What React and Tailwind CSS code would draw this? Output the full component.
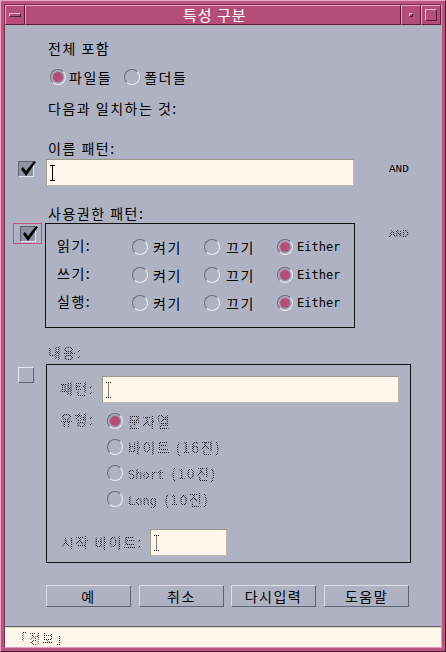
import React from "react";

const STIP =
  "bg-[image:repeating-conic-gradient(#000_0%_25%,transparent_0%_50%)] bg-[length:2px_2px] bg-clip-text text-transparent";

function Radio({ on }) {
  return (
    <span className="relative inline-block w-[16px] h-[16px] shrink-0 rounded-full border border-t-[#6a6d7b] border-l-[#6a6d7b] border-r-[#eceef4] border-b-[#eceef4]">
      {on && <span className="absolute inset-[1px] rounded-full bg-[#b44e78] border border-[#9aa0b3]" />}
    </span>
  );
}

function Check({ on }) {
  return (
    <span
      className={
        "relative inline-block w-[16px] h-[16px] shrink-0 border " +
        (on
          ? "bg-[#8e92a5] border-t-[#5f6270] border-l-[#5f6270] border-r-[#e6e8ef] border-b-[#e6e8ef]"
          : "bg-[#aeb2c3] border-t-[#e6e8ef] border-l-[#e6e8ef] border-r-[#5f6270] border-b-[#5f6270]")
      }
    >
      {on && (
        <svg className="absolute left-[1px] -top-[1px]" width="16" height="16" viewBox="0 0 16 16">
          <polygon points="1,8 3,6 6,10 14,0 16,1 6,15" fill="#000" />
        </svg>
      )}
    </span>
  );
}

function Cursor({ dim }) {
  return (
    <svg width="7" height="16" viewBox="0 0 7 16" className="shrink-0">
      <g stroke="#000" strokeWidth="1" strokeDasharray={dim ? "1 1" : undefined}>
        <line x1="1" y1="0.5" x2="6" y2="0.5" />
        <line x1="3.5" y1="0.5" x2="3.5" y2="15.5" />
        <line x1="1" y1="15.5" x2="6" y2="15.5" />
      </g>
    </svg>
  );
}

function Field({ w, dim }) {
  return (
    <div
      className={`h-[27px] ${w} bg-[#fff7eb] border border-t-[#9c9889] border-l-[#9c9889] border-r-[#bfbbac] border-b-[#bfbbac] flex items-center pl-[2px]`}
    >
      <Cursor dim={dim} />
    </div>
  );
}

const MONO = "font-['DejaVu_Sans_Mono',monospace] tracking-normal";
const LMONO = "font-['Liberation_Mono',monospace] tracking-normal";

function PermRow({ label }) {
  return (
    <div className="h-[28px] flex items-center">
      <span className="w-[75px] leading-[16px] -mt-[4px]">{label}</span>
      <div className="w-[72px] flex items-center">
        <Radio />
        <span className="ml-[5px]">켜기</span>
      </div>
      <div className="w-[73px] flex items-center">
        <Radio />
        <span className="ml-[6px]">끄기</span>
      </div>
      <div className="flex items-center">
        <Radio on />
        <span className={"ml-[4px] text-[12px] " + MONO}>Either</span>
      </div>
    </div>
  );
}

function TypeRow({ on, children }) {
  return (
    <div className="h-[26px] flex items-center pl-[60px]">
      <Radio on={on} />
      <span className={"ml-[5px] " + STIP}>{children}</span>
    </div>
  );
}

function Btn({ children, cls = "" }) {
  return (
    <div
      className={`w-[85px] h-[22px] flex items-center justify-center border border-t-[#dcdee7] border-l-[#dcdee7] border-r-[#5f6271] border-b-[#5f6271] ${cls}`}
    >
      {children}
    </div>
  );
}

export default function App() {
  return (
    <div className="w-[446px] h-[652px] bg-[#b8557f] border border-t-[#eaa6c4] border-l-[#eaa6c4] border-r-[#4f1530] border-b-[#4f1530] p-[3px] font-['Noto_Sans_CJK_KR',sans-serif] text-[14px] tracking-[1.5px] text-black">
      <div className="w-full h-full border border-t-[#7d2d50] border-l-[#7d2d50] border-r-[#e49bbb] border-b-[#e49bbb] flex flex-col">
        {/* title bar */}
        <div className="h-[20px] flex shrink-0 bg-[#b44e78]">
          <div className="w-[20px] h-[20px] shrink-0 border border-t-[#e8a0c0] border-l-[#e8a0c0] border-r-[#5a1a38] border-b-[#5a1a38] flex items-center justify-center">
            <span className="w-[12px] h-[4px] border border-t-[#f0b6cf] border-l-[#f0b6cf] border-r-[#5a1a38] border-b-[#5a1a38]" />
          </div>
          <div className="flex-1 h-[20px] border border-t-[#e8a0c0] border-l-[#e8a0c0] border-r-[#5a1a38] border-b-[#5a1a38] flex items-center pl-[157px] text-white text-[15px] leading-[18px] tracking-[1px]">
            특성 구분
          </div>
          <div className="w-[20px] h-[20px] shrink-0 border border-t-[#e8a0c0] border-l-[#e8a0c0] border-r-[#5a1a38] border-b-[#5a1a38] flex items-center justify-center">
            <span className="w-[4px] h-[4px] border border-t-[#f0b6cf] border-l-[#f0b6cf] border-r-[#5a1a38] border-b-[#5a1a38]" />
          </div>
          <div className="w-[20px] h-[20px] shrink-0 border border-t-[#e8a0c0] border-l-[#e8a0c0] border-r-[#5a1a38] border-b-[#5a1a38] flex items-center justify-center">
            <span className="w-[12px] h-[12px] border border-t-[#f0b6cf] border-l-[#f0b6cf] border-r-[#5a1a38] border-b-[#5a1a38]" />
          </div>
        </div>

        {/* content */}
        <div className="h-[602px] shrink-0 bg-[#aeb2c3] border-b border-b-[#5e616d] flex flex-col">
          <div className="mt-[15px] h-[16px] leading-[16px] pl-[43px]">전체 포함</div>

          <div className="mt-[11px] h-[20px] flex items-center pl-[45px]">
            <Radio on />
            <span className="ml-[3px]">파일들</span>
            <span className="ml-[12px] flex">
              <Radio />
            </span>
            <span className="ml-[4px]">폴더들</span>
          </div>

          <div className="mt-[13px] h-[16px] leading-[16px] pl-[43px]">다음과 일치하는 것:</div>

          <div className="mt-[24px] h-[16px] leading-[16px] pl-[43px]">이름 패턴:</div>

          <div className="mt-[3px] h-[27px] flex items-start pl-[13px]">
            <span className="mt-[2px] flex">
              <Check on />
            </span>
            <div className="ml-[12px]">
              <Field w="w-[308px]" />
            </div>
            <span className={"ml-[35px] mt-[3px] text-[11px] leading-[14px] " + LMONO}>AND</span>
          </div>

          <div className="mt-[19px] h-[16px] leading-[16px] pl-[43px]">사용권한 패턴:</div>

          <div className="mt-[2px] flex items-start pl-[8px]">
            <div className="w-[29px] h-[21px] border border-[#c4507f] flex items-center justify-center">
              <Check on />
            </div>
            <div className="ml-[3px] w-[310px] border border-[#111] pt-[9px] pb-[10px] pl-[11px]">
              <PermRow label="읽기:" />
              <PermRow label="쓰기:" />
              <PermRow label="실행:" />
            </div>
            <span className={"ml-[34px] mt-[4px] text-[11px] leading-[14px] " + LMONO + " " + STIP}>AND</span>
          </div>

          <div className="mt-[16px] h-[16px] leading-[16px] pl-[43px]">
            <span className={STIP}>내용:</span>
          </div>

          <div className="mt-[4px] flex items-start pl-[13px]">
            <span className="mt-[3px] flex">
              <Check />
            </span>
            <div className="ml-[12px] w-[365px] border border-[#111] pt-[11px] pb-[6px] pl-[13px]">
              <div className="h-[27px] flex items-center">
                <span className={"w-[42px] -mt-[2px] " + STIP}>패턴:</span>
                <Field w="w-[297px]" dim />
              </div>
              <div className="mt-[5px] relative">
                <span className={"absolute left-0 top-[3px] leading-[16px] " + STIP}>유형:</span>
                <div className="-ml-[13px]">
                  <TypeRow on>문자열</TypeRow>
                  <TypeRow>바이트 (16진)</TypeRow>
                  <TypeRow>
                    <span className={"text-[12px] " + MONO}>Short </span>(10진)
                  </TypeRow>
                  <TypeRow>
                    <span className={"text-[12px] " + MONO}>Long </span>(10진)
                  </TypeRow>
                </div>
              </div>
              <div className="mt-[17px] h-[27px] flex items-center">
                <span className={"w-[90px] pl-[1px] " + STIP}>시작 바이트:</span>
                <Field w="w-[77px]" dim />
              </div>
            </div>
          </div>

          <div className="mt-[22px] flex pl-[41px]">
            <Btn>예</Btn>
            <Btn cls="ml-[8px]">취소</Btn>
            <Btn cls="ml-[7px]">다시입력</Btn>
            <Btn cls="ml-[8px]">도움말</Btn>
          </div>
        </div>

        {/* status bar */}
        <div className="flex-1 bg-[#fff7eb] border-t border-t-[#d9d5c8] flex items-center pl-[9px]">
          <span className={"text-[13px] leading-[16px] " + STIP}>「정보」</span>
        </div>
      </div>
    </div>
  );
}
